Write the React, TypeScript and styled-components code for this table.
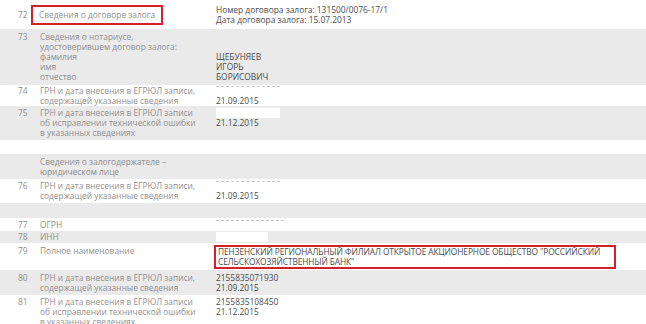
import styled, { createGlobalStyle } from "styled-components";

const Global = createGlobalStyle`
  body {
    margin: 0;
    background: #ffffff;
  }
`;

const Table = styled.div`
  width: 646px;
  height: 324px;
  overflow: hidden;
  font-family: "Open Sans", "Liberation Sans", sans-serif;
  font-size: 8.4px;
  line-height: 10px;
  background: #ffffff;
`;

const Row = styled.div<{ shade?: boolean; pad?: number; center?: boolean; h?: number }>`
  display: grid;
  grid-template-columns: 40px 176px 1fr;
  align-items: ${(p) => (p.center ? "center" : "start")};
  background: ${(p) => (p.shade ? "#eaeaeb" : "#ffffff")};
  padding: ${(p) => (p.pad ?? 2)}px 0;
  min-height: ${(p) => p.h ?? 0}px;
  box-sizing: border-box;
`;

const Num = styled.div`
  padding-left: 18px;
  color: #8d8d8d;
`;

const Label = styled.div`
  color: #8f8f8f;
  white-space: pre-line;
`;

const Value = styled.div<{ skip?: number }>`
  color: #4b4b4b;
  padding-top: ${(p) => (p.skip ?? 0) * 10}px;
  white-space: pre-line;
`;

const Mark = styled.span`
  display: inline-block;
  border: 2.5px solid #d3202c;
  padding: 3px 6px 3px 6px;
  margin: -5px 0 -5px -9px;
`;

const WideMark = styled.div`
  border: 2.5px solid #d3202c;
  padding: 0 4px 0 2px;
  margin: -1px 0 -1px -2px;
  width: 392px;
  white-space: pre;
  letter-spacing: -0.1px;
`;

const Blank = styled.div<{ w: number; dashed?: boolean }>`
  width: ${(p) => p.w}px;
  height: 10px;
  background: #ffffff;
  box-sizing: border-box;
  border-top: ${(p) => (p.dashed ? "1px dashed #c9c9c9" : "none")};
`;

function App() {
  return (
    <>
      <Global />
      <Table>
        <Row pad={4.5} center>
          <Num>72</Num>
          <Label>
            <Mark>Сведения о договоре залога</Mark>
          </Label>
          <Value>
            {"Номер договора залога: 131500/0076-17/1\nДата договора залога: 15.07.2013"}
          </Value>
        </Row>
        <Row shade pad={3}>
          <Num>73</Num>
          <Label>
            {"Сведения о нотариусе,\nудостоверившем договор залога:\nфамилия\nимя\nотчество"}
          </Label>
          <Value skip={2}>{"ЩЕБУНЯЕВ\nИГОРЬ\nБОРИСОВИЧ"}</Value>
        </Row>
        <Row pad={0.5}>
          <Num>74</Num>
          <Label>{"ГРН и дата внесения в ЕГРЮЛ записи,\nсодержащей указанные сведения"}</Label>
          <Value>
            <Blank w={64} dashed />
            21.09.2015
          </Value>
        </Row>
        <Row shade pad={2}>
          <Num>75</Num>
          <Label>
            {"ГРН и дата внесения в ЕГРЮЛ записи\nоб исправлении технической ошибки\nв указанных сведениях"}
          </Label>
          <Value>
            <Blank w={64} />
            21.12.2015
          </Value>
        </Row>
        <Row h={14} pad={0} />
        <Row shade pad={2.5}>
          <Num />
          <Label>{"Сведения о залогодержателе –\nюридическом лице"}</Label>
          <Value />
        </Row>
        <Row pad={2}>
          <Num>76</Num>
          <Label>{"ГРН и дата внесения в ЕГРЮЛ записи,\nсодержащей указанные сведения"}</Label>
          <Value>
            <Blank w={64} dashed />
            21.09.2015
          </Value>
        </Row>
        <Row shade h={15} pad={0} />
        <Row pad={1.5}>
          <Num>77</Num>
          <Label>ОГРН</Label>
          <Value>
            <Blank w={68} dashed />
          </Value>
        </Row>
        <Row shade pad={1}>
          <Num>78</Num>
          <Label>ИНН</Label>
          <Value>
            <Blank w={52} />
          </Value>
        </Row>
        <Row pad={2.5}>
          <Num>79</Num>
          <Label>Полное наименование</Label>
          <Value>
            <WideMark>
              {"ПЕНЗЕНСКИЙ РЕГИОНАЛЬНЫЙ ФИЛИАЛ ОТКРЫТОЕ АКЦИОНЕРНОЕ ОБЩЕСТВО \"РОССИЙСКИЙ\nСЕЛЬСКОХОЗЯЙСТВЕННЫЙ БАНК\""}
            </WideMark>
          </Value>
        </Row>
        <Row shade pad={2.5}>
          <Num>80</Num>
          <Label>{"ГРН и дата внесения в ЕГРЮЛ записи,\nсодержащей указанные сведения"}</Label>
          <Value>{"2155835071930\n21.09.2015"}</Value>
        </Row>
        <Row pad={2}>
          <Num>81</Num>
          <Label>
            {"ГРН и дата внесения в ЕГРЮЛ записи\nоб исправлении технической ошибки\nв указанных сведениях"}
          </Label>
          <Value>{"2155835108450\n21.12.2015"}</Value>
        </Row>
      </Table>
    </>
  );
}

export default App;
